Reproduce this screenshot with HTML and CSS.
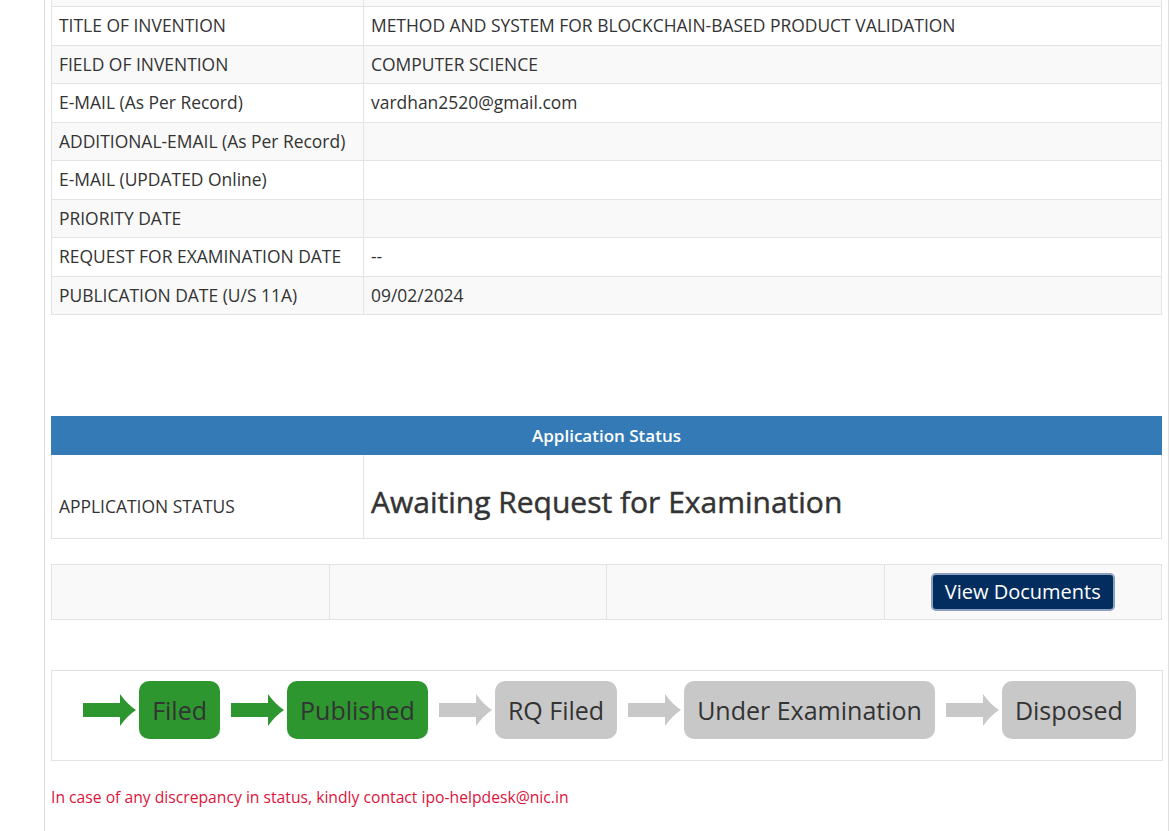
FILE: index.html
```html
<!DOCTYPE html>
<html lang="en">
<head>
<meta charset="utf-8">
<title>Application Status</title>
<link rel="stylesheet" href="styles.css">
</head>
<body>
<div class="page">
  <table class="info">
    <tbody>
      <tr class="odd"><td class="lbl"></td><td></td></tr>
      <tr><td class="lbl">TITLE OF INVENTION</td><td>METHOD AND SYSTEM FOR BLOCKCHAIN-BASED PRODUCT VALIDATION</td></tr>
      <tr class="odd"><td class="lbl">FIELD OF INVENTION</td><td>COMPUTER SCIENCE</td></tr>
      <tr><td class="lbl">E-MAIL (As Per Record)</td><td>vardhan2520@gmail.com</td></tr>
      <tr class="odd"><td class="lbl">ADDITIONAL-EMAIL (As Per Record)</td><td></td></tr>
      <tr><td class="lbl">E-MAIL (UPDATED Online)</td><td></td></tr>
      <tr class="odd"><td class="lbl">PRIORITY DATE</td><td></td></tr>
      <tr><td class="lbl">REQUEST FOR EXAMINATION DATE</td><td>--</td></tr>
      <tr class="odd"><td class="lbl">PUBLICATION DATE (U/S 11A)</td><td>09/02/2024</td></tr>
    </tbody>
  </table>

  <table class="status">
    <thead>
      <tr><th colspan="2">Application Status</th></tr>
    </thead>
    <tbody>
      <tr>
        <td class="lbl status-lbl">APPLICATION STATUS</td>
        <td class="status-val"><h2 class="status-text">Awaiting Request for Examination</h2></td>
      </tr>
    </tbody>
  </table>

  <table class="actions">
    <tbody>
      <tr>
        <td></td>
        <td></td>
        <td></td>
        <td class="btn-cell"><button class="btn-docs" type="button">View Documents</button></td>
      </tr>
    </tbody>
  </table>

  <div class="progress">
    <div class="step done">
      <svg class="arrow" viewBox="0 0 53 32" width="53" height="32"><path d="M0 9 H37 L37 0 Q44 10 53 16 Q44 22 37 32 L37 23 H0 Z"/></svg>
      <span class="box">Filed</span>
    </div>
    <div class="step done">
      <svg class="arrow" viewBox="0 0 53 32" width="53" height="32"><path d="M0 9 H37 L37 0 Q44 10 53 16 Q44 22 37 32 L37 23 H0 Z"/></svg>
      <span class="box">Published</span>
    </div>
    <div class="step">
      <svg class="arrow" viewBox="0 0 53 32" width="53" height="32"><path d="M0 9 H37 L37 0 Q44 10 53 16 Q44 22 37 32 L37 23 H0 Z"/></svg>
      <span class="box">RQ Filed</span>
    </div>
    <div class="step">
      <svg class="arrow" viewBox="0 0 53 32" width="53" height="32"><path d="M0 9 H37 L37 0 Q44 10 53 16 Q44 22 37 32 L37 23 H0 Z"/></svg>
      <span class="box">Under Examination</span>
    </div>
    <div class="step">
      <svg class="arrow" viewBox="0 0 53 32" width="53" height="32"><path d="M0 9 H37 L37 0 Q44 10 53 16 Q44 22 37 32 L37 23 H0 Z"/></svg>
      <span class="box">Disposed</span>
    </div>
  </div>

  <p class="note">In case of any discrepancy in status, kindly contact ipo-helpdesk@nic.in</p>
</div>
</body>
</html>
```
FILE: styles.css
```css
html, body {
  margin: 0;
  padding: 0;
  background: #fff;
}
body {
  font-family: "Open Sans", "DejaVu Sans", sans-serif;
  color: #333;
  overflow: hidden;
}
.page {
  margin: -32.5px 0 0 44px;
  width: 1112px;
  padding: 0 5px 40px 6px;
  border-left: 1px solid #ddd;
  border-right: 1px solid #ddd;
  min-height: 900px;
}
table {
  width: 1111px;
  border-collapse: collapse;
  border-spacing: 0;
}
.info td, .status td, .actions td {
  border: 1px solid #e3e3e3;
  padding: 7px;
  font-size: 17.45px;
  line-height: 23.5px;
  height: 23.5px;
  vertical-align: top;
}
.info td.lbl, .status td.lbl {
  width: 297px;
}
.info tr.odd td {
  background: #f9f9f9;
}
.status {
  margin-top: 101px;
}
.status th {
  background: #337ab7;
  color: #fff;
  font-weight: 600;
  font-size: 17px;
  line-height: 21px;
  padding: 8px;
  text-align: center;
  border: 1px solid #337ab7;
}
.status td {
  vertical-align: bottom;
  padding-bottom: 19px;
}
.status td.status-lbl {
  padding-bottom: 20px;
}
.status-text {
  margin: 21px 0 0 0;
  font-size: 30px;
  line-height: 36px;
  font-weight: 500;
  color: #333;
  -webkit-text-stroke: 0.45px #333;
  position: relative;
  top: 1px;
}
.actions {
  margin-top: 25px;
  table-layout: fixed;
}
.actions td {
  background: #f9f9f9;
  height: 54px;
  padding: 0;
  vertical-align: middle;
}
.btn-cell {
  text-align: center;
}
.btn-docs {
  font-family: "Open Sans", "DejaVu Sans", sans-serif;
  font-size: 20px;
  line-height: 28px;
  color: #fff;
  background: #022d5e;
  border: 2px solid #8c9fbf;
  border-radius: 5px;
  padding: 3px 12px;
  cursor: pointer;
}
.progress {
  margin-top: 50px;
  border: 1px solid #e3e3e3;
  box-sizing: border-box;
  height: 91px;
  display: flex;
  align-items: center;
  justify-content: center;
  padding: 0 0 12px 5px;
}
.step {
  display: flex;
  align-items: center;
  margin-left: 11px;
}
.step:first-child {
  margin-left: 0;
}
.arrow {
  display: block;
  fill: #c8c8c8;
  margin-right: 3px;
}
.step.done .arrow {
  fill: #2e962e;
}
.box {
  display: block;
  background: #c8c8c8;
  border-radius: 10px;
  height: 58px;
  line-height: 58px;
  padding: 0 13px;
  font-size: 25px;
  color: #333;
}
.step.done .box {
  background: #2e962e;
}
.note {
  margin: 26px 0 0 0;
  color: #dc143c;
  font-size: 15.7px;
  line-height: 20px;
}
```
